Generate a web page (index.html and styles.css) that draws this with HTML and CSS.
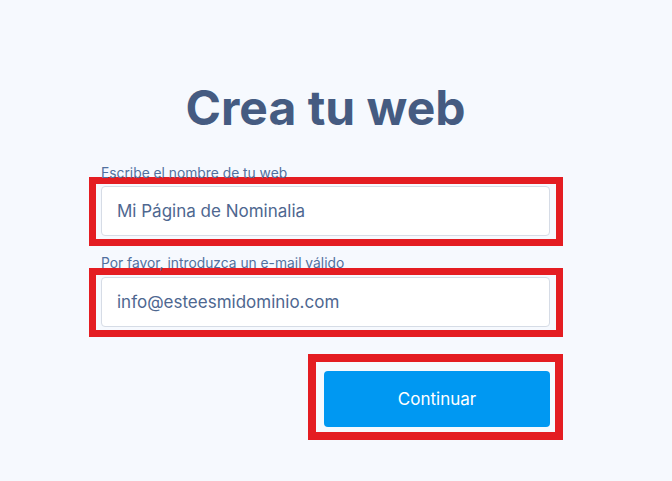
FILE: index.html
```html
<!DOCTYPE html>
<html lang="es">
<head>
  <meta charset="UTF-8" />
  <meta name="viewport" content="width=device-width, initial-scale=1.0"/>
  <title>Crea tu web</title>
  <link rel="stylesheet" href="styles.css">
</head>
<body>
  <div class="create-web">
    <h1>Crea tu web</h1>
    <form id="create-web-form">
      <label class="field-label" for="site-name">Escribe el nombre de tu web</label>
      <div class="highlight">
        <input type="text" id="site-name" value="Mi Página de Nominalia">
      </div>
      <label class="field-label second" for="site-email">Por favor, introduzca un e-mail válido</label>
      <div class="highlight">
        <input type="email" id="site-email" value="info@esteesmidominio.com">
      </div>
      <div class="actions">
        <div class="highlight button-box">
          <button type="submit" class="button">Continuar</button>
        </div>
      </div>
    </form>
  </div>
</body>
</html>
```

FILE: styles.css
```css
body {
  font-family: 'Inter', 'Liberation Sans', sans-serif;
  background-color: #F6F9FE;
  margin: 0;
  padding: 0;
}
.create-web {
  width: 449px;
  margin-left: 101px;
  padding-top: 80px;
}
h1 {
  margin: 0;
  text-align: center;
  font-size: 48px;
  line-height: 56px;
  font-weight: 700;
  color: #455B81;
}
.field-label {
  display: block;
  margin-top: 29px;
  margin-bottom: -4px;
  font-size: 13.8px;
  line-height: 16px;
  color: #51709E;
}
.field-label.second {
  margin-top: 9px;
  margin-bottom: -3px;
}
.highlight {
  border: 7px solid #E41D22;
  padding: 2px 6px 3px 5px;
  margin: 0 -13px 0 -12px;
}
.highlight input {
  display: block;
  width: 100%;
  height: 50px;
  padding: 0 15px;
  border: 1px solid #D6DCE6;
  border-radius: 4px;
  background-color: #FFFFFF;
  font-family: inherit;
  font-size: 17px;
  color: #4E6790;
  box-sizing: border-box;
  outline: none;
}
.actions {
  display: flex;
  justify-content: flex-end;
  margin: 17px -13px 0 0;
}
.highlight.button-box {
  margin: 0;
  border-width: 8px;
  padding: 9px 5px 5px 8px;
}
.button {
  display: block;
  width: 226px;
  height: 56px;
  background-color: #0098F2;
  color: #FFFFFF;
  border: none;
  border-radius: 4px;
  font-family: inherit;
  font-size: 17px;
  cursor: pointer;
}
```
